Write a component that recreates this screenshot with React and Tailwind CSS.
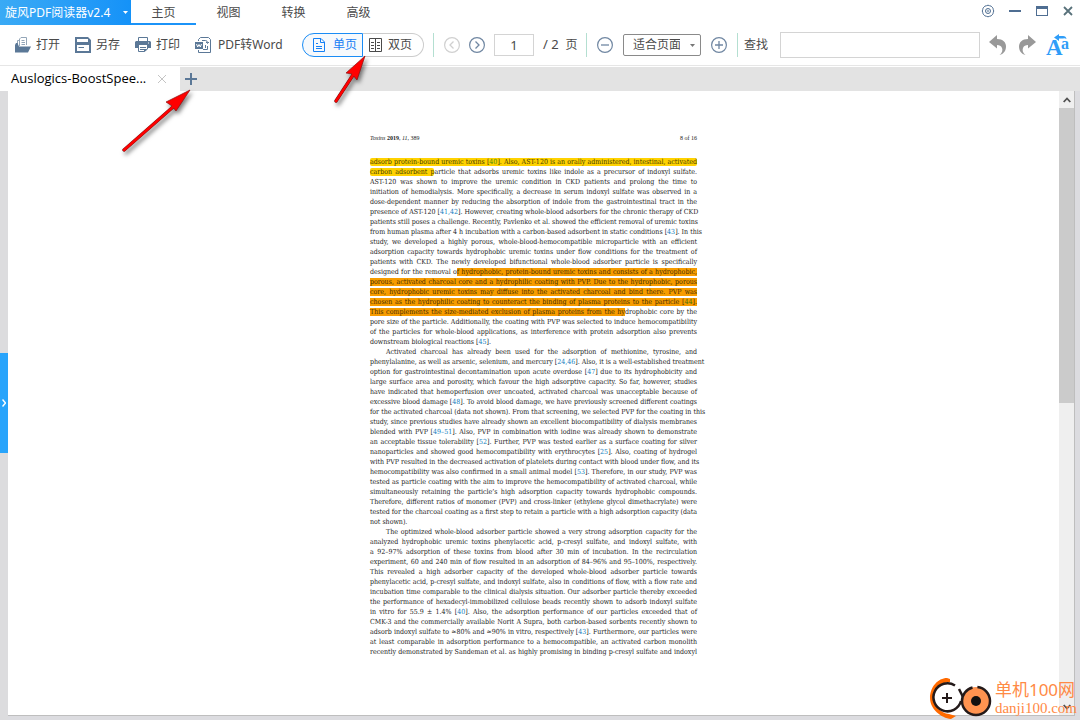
import React from "react";

const tabs = ["主页", "视图", "转换", "高级"];

/* Each paragraph is a list of typeset lines; highlighted runs are [tone, text] pairs. */
const paragraphs = [
  [
    [["yellow", "adsorb protein-bound uremic toxins [40]. Also, AST-120 is an orally administered, intestinal, activated"]],
    [["yellow", "carbon adsorbent p"], "article that adsorbs uremic toxins like indole as a precursor of indoxyl sulfate."],
    "AST-120 was shown to improve the uremic condition in CKD patients and prolong the time to",
    "initiation of hemodialysis. More specifically, a decrease in serum indoxyl sulfate was observed in a",
    "dose-dependent manner by reducing the absorption of indole from the gastrointestinal tract in the",
    "presence of AST-120 [41,42]. However, creating whole-blood adsorbers for the chronic therapy of CKD",
    "patients still poses a challenge. Recently, Pavlenko et al. showed the efficient removal of uremic toxins",
    "from human plasma after 4 h incubation with a carbon-based adsorbent in static conditions [43]. In this",
    "study, we developed a highly porous, whole-blood-hemocompatible microparticle with an efficient",
    "adsorption capacity towards hydrophobic uremic toxins under flow conditions for the treatment of",
    "patients with CKD. The newly developed bifunctional whole-blood adsorber particle is specifically",
    ["designed for the removal o", ["orange", "f hydrophobic, protein-bound uremic toxins and consists of a hydrophobic,"]],
    [["orange", "porous, activated charcoal core and a hydrophilic coating with PVP. Due to the hydrophobic, porous"]],
    [["orange", "core, hydrophobic uremic toxins may diffuse into the activated charcoal and bind there. PVP was"]],
    [["orange", "chosen as the hydrophilic coating to counteract the binding of plasma proteins to the particle [44]."]],
    [["orange", "This complements the size-mediated exclusion of plasma proteins from the hy"], "drophobic core by the"],
    "pore size of the particle. Additionally, the coating with PVP was selected to induce hemocompatibility",
    "of the particles for whole-blood applications, as interference with protein adsorption also prevents",
    "downstream biological reactions [45].",
  ],
  [
    "Activated charcoal has already been used for the adsorption of methionine, tyrosine, and",
    "phenylalanine, as well as arsenic, selenium, and mercury [24,46]. Also, it is a well-established treatment",
    "option for gastrointestinal decontamination upon acute overdose [47] due to its hydrophobicity and",
    "large surface area and porosity, which favour the high adsorptive capacity. So far, however, studies",
    "have indicated that hemoperfusion over uncoated, activated charcoal was unacceptable because of",
    "excessive blood damage [48]. To avoid blood damage, we have previously screened different coatings",
    "for the activated charcoal (data not shown). From that screening, we selected PVP for the coating in this",
    "study, since previous studies have already shown an excellent biocompatibility of dialysis membranes",
    "blended with PVP [49–51]. Also, PVP in combination with iodine was already shown to demonstrate",
    "an acceptable tissue tolerability [52]. Further, PVP was tested earlier as a surface coating for silver",
    "nanoparticles and showed good hemocompatibility with erythrocytes [25]. Also, coating of hydrogel",
    "with PVP resulted in the decreased activation of platelets during contact with blood under flow, and its",
    "hemocompatibility was also confirmed in a small animal model [53]. Therefore, in our study, PVP was",
    "tested as particle coating with the aim to improve the hemocompatibility of activated charcoal, while",
    "simultaneously retaining the particle’s high adsorption capacity towards hydrophobic compounds.",
    "Therefore, different ratios of monomer (PVP) and cross-linker (ethylene glycol dimethacrylate) were",
    "tested for the charcoal coating as a first step to retain a particle with a high adsorption capacity (data",
    "not shown).",
  ],
  [
    "The optimized whole-blood adsorber particle showed a very strong adsorption capacity for the",
    "analyzed hydrophobic uremic toxins phenylacetic acid, p-cresyl sulfate, and indoxyl sulfate, with",
    "a 92–97% adsorption of these toxins from blood after 30 min of incubation. In the recirculation",
    "experiment, 60 and 240 min of flow resulted in an adsorption of 84–96% and 95–100%, respectively.",
    "This revealed a high adsorber capacity of the developed whole-blood adsorber particle towards",
    "phenylacetic acid, p-cresyl sulfate, and indoxyl sulfate, also in conditions of flow, with a flow rate and",
    "incubation time comparable to the clinical dialysis situation. Our adsorber particle thereby exceeded",
    "the performance of hexadecyl-immobilized cellulose beads recently shown to adsorb indoxyl sulfate",
    "in vitro for 55.9 ± 1.4% [40]. Also, the adsorption performance of our particles exceeded that of",
    "CMK-3 and the commercially available Norit A Supra, both carbon-based sorbents recently shown to",
    "adsorb indoxyl sulfate to ≈80% and ≈90% in vitro, respectively [43]. Furthermore, our particles were",
    "at least comparable in adsorption performance to a hemocompatible, an activated carbon monolith",
    "recently demonstrated by Sandeman et al. as highly promising in binding p-cresyl sulfate and indoxyl",
  ],
];

function Cited({ text, linkClass }) {
  return text.split(/(\[[\d,–]+\])/).map((part, i) =>
    i % 2 ? (
      <React.Fragment key={i}>
        [<a href="#references" className={linkClass}>{part.slice(1, -1)}</a>]
      </React.Fragment>
    ) : (
      part
    )
  );
}

const tones = {
  yellow: ["rounded-xs bg-[#ffd200] text-[#453900]", "text-[#4a8a10]"],
  orange: ["bg-[#f79c00] text-[#452c00]", "text-[#4a7010]"],
};

function Line({ line, indent, last }) {
  const runs = Array.isArray(line) ? line : [line];
  return (
    <span className={`block whitespace-nowrap ${last ? "" : "[text-align-last:justify]"} ${indent ? "pl-4" : ""}`}>
      {runs.map((run, i) =>
        Array.isArray(run) ? (
          <mark key={i} className={tones[run[0]][0]}>
            <Cited text={run[1]} linkClass={tones[run[0]][1]} />
          </mark>
        ) : (
          <Cited key={i} text={run} linkClass="text-[#1580c0]" />
        )
      )}
    </span>
  );
}

function Icon({ className = "size-4", box = "0 0 16 16", children }) {
  return (
    <svg viewBox={box} className={`${className} shrink-0`} fill="none" stroke="currentColor" aria-hidden="true">
      {children}
    </svg>
  );
}

function Tool({ label, icon, className = "gap-[5px]" }) {
  return (
    <button type="button" className={`flex shrink-0 items-center whitespace-nowrap ${className}`}>
      {icon}
      <span>{label}</span>
    </button>
  );
}

const OpenIcon = () => (
  <Icon className="size-4 text-[#5b7897]">
    <path d="M2.500 10V3.500H4M4.500 9V2L6 .500H11.500V8" stroke="#94a6b8" />
    <path d="M6.500 3.500H9.500M6.500 5.500H10M6.500 7.500H10" stroke="#94a6b8" />
    <path d="M0 15.500V8L1 6H2.500L4 9.500H16L13 15.500Z" fill="currentColor" stroke="none" />
  </Icon>
);
const SaveIcon = () => (
  <Icon className="size-4 text-[#5b7897]">
    <path d="M0 0H13L16 3V16H0ZM2 2V5H13V2ZM2 8V14H14V8Z" fill="currentColor" fillRule="evenodd" stroke="none" />
    <path d="M3.500 10.500H9" />
  </Icon>
);
const PrintIcon = () => (
  <Icon className="size-4 text-[#5b7897]">
    <path d="M3.500 4V.5H12.500V4" />
    <path d="M1 4H15L16 5V11H13V8H3V11H0V5Z" fill="currentColor" stroke="none" />
    <path d="M13 6H14" stroke="#fff" />
    <path d="M3.500 8V14.500H9.500L12.500 12V8M5 10.500H11M5 12.500H9" />
    <path d="M9 15V12H12.500Z" fill="currentColor" stroke="none" />
  </Icon>
);
const WordIcon = () => (
  <Icon className="size-4 text-[#5b7897]">
    <path d="M3.500 4V2.500L5.500.5H13.500L15.500 2.500V15.500H3.500V13" />
    <path d="M0 5H8V12H0Z" fill="currentColor" stroke="none" />
    <path d="M1.500 7L2.700 10L4 7.500L5.300 10L6.500 7" stroke="#fff" />
    <path d="M7 3.500H10.500Q12.500 3.500 12.500 6M11 5L12.500 6.500L14 5M12.500 9V12.500H8M10.500 8V11" />
  </Icon>
);
const SingleIcon = () => (
  <Icon className="h-3.5 w-3" box="0 0 12 14">
    <path d="M.5.5H8L11.500 4V13.500H.5ZM7.500.5V4.500H11.500M3 5.500H5M3 8.500H9M3 10.500H9" />
  </Icon>
);
const DoubleIcon = () => (
  <Icon className="h-3.5 w-[13px]" box="0 0 13 14">
    <path d="M.5.5H12.500V13.500H.5ZM6.500.5V13.500M2 4.500H5M2 7.500H5M2 10.500H5M8 4.500H11M8 7.500H11M8 10.500H11" />
  </Icon>
);

function CircleButton({ label, path, className = "text-[#7087a2]" }) {
  return (
    <button type="button" aria-label={label} className={`shrink-0 ${className}`}>
      <Icon className="size-4">
        <circle cx="8" cy="8" r="7.400" strokeWidth="1.200" />
        <path d={path} strokeWidth="1.300" />
      </Icon>
    </button>
  );
}

const Divider = ({ className }) => <span className={`h-6 w-px shrink-0 bg-[#b4dfd1] ${className}`} />;

function TitleBar() {
  return (
    <header className="flex h-[25px] shrink-0 items-stretch">
      <button type="button" className="flex w-[131px] items-center justify-between bg-linear-to-r from-[#3aaaf5] to-[#1492f8] pr-[3px] pl-[5px] text-white">
        <span>旋风PDF阅读器v2.4</span>
        <Icon className="h-[3px] w-[5px]" box="0 0 5 3">
          <path d="M0 0H5L2.500 3Z" fill="currentColor" stroke="none" />
        </Icon>
      </button>
      <nav className="flex flex-1">
        {tabs.map((t, i) => (
          <button key={t} type="button" className={`w-[65px] border-b-2 pt-[2px] ${i === 0 ? "border-[#1b93f8]" : "border-transparent"}`}>
            {t}
          </button>
        ))}
      </nav>
      <div className="flex items-center gap-[15px] pr-[7px] pb-[3px] text-[#4f6e92]">
        <button type="button" aria-label="设置">
          <Icon className="size-3 overflow-visible" box="0 0 12 12">
            <path d="M4.500.7Q6-.3 7.500.7Q9.500.8 10 2.200Q11.500 3 11.300 4.700Q12.200 6 11.300 7.300Q11.500 9 10 9.800Q9.500 11.200 7.500 11.300Q6 12.300 4.500 11.300Q2.500 11.200 2 9.800Q.5 9 .7 7.300Q-.2 6 .7 4.700Q.5 3 2 2.200Q2.500.8 4.500.7Z" />
            <circle cx="6" cy="6" r="2.500" />
            <circle cx="6" cy="6" r=".8" strokeWidth=".6" />
          </Icon>
        </button>
        <button type="button" aria-label="最小化">
          <Icon className="size-3" box="0 0 12 12"><path d="M0 6H12" strokeWidth="2" /></Icon>
        </button>
        <button type="button" aria-label="最大化">
          <Icon className="size-3" box="0 0 12 12">
            <path d="M0 1H12V11H0ZM1 4V10H11V4Z" fill="currentColor" fillRule="evenodd" stroke="none" />
          </Icon>
        </button>
        <button type="button" aria-label="关闭">
          <Icon className="size-[10px]" box="0 0 10 10"><path d="M1 1L9 9M9 1L1 9" strokeWidth="1.800" stroke="#58717a" /></Icon>
        </button>
      </div>
    </header>
  );
}

function Toolbar() {
  return (
    <div className="flex h-[41px] shrink-0 items-center border-b border-[#e6e6e6] pr-[11px] pl-[15px]">
      <div className="flex shrink-0 gap-[15px]">
        <Tool label="打开" icon={<OpenIcon />} />
        <Tool label="另存" icon={<SaveIcon />} />
        <Tool label="打印" icon={<PrintIcon />} />
        <Tool label="PDF转Word" icon={<WordIcon />} className="w-[90px] gap-[7px]" />
      </div>
      <div className="ml-[17px] flex h-6 w-[122px] shrink-0">
        <Tool label="单页" icon={<SingleIcon />} className="w-[61px] gap-2 rounded-l-full border border-[#1a8cf5] bg-[#f6f9fc] pl-[10px] text-[#1580f5]" />
        <Tool label="双页" icon={<DoubleIcon />} className="flex-1 gap-[6px] rounded-r-full border border-l-0 border-[#cccccc] pl-[6px]" />
      </div>
      <Divider className="mr-[10px] ml-[9px]" />
      <div className="flex shrink-0 items-center gap-[9px]">
        <CircleButton label="上一页" path="M9.500 4.500L6 8L9.500 11.500" className="text-[#d0d0d0]" />
        <CircleButton label="下一页" path="M6.500 4.500L10 8L6.500 11.500" />
        <input aria-label="页码" defaultValue="1" className="h-[22px] w-10 border border-[#d4d4d4] text-center text-[13px] outline-none" />
        <span className="w-[35px] whitespace-pre text-[13px]">/ 2  <span className="text-xs">页</span></span>
      </div>
      <Divider className="mr-[10px] ml-[8px]" />
      <div className="flex shrink-0 items-center gap-[10px]">
        <CircleButton label="缩小" path="M4 8H12" />
        <span className="grid items-center">
          <select aria-label="缩放" className="col-start-1 row-start-1 h-[22px] w-[78px] appearance-none rounded-xs border border-[#8a8a8a] bg-white pr-5 pl-[9px] outline-none">
            <option>适合页面</option>
          </select>
          <Icon className="pointer-events-none col-start-1 row-start-1 mr-[6px] h-[3px] w-[5px] justify-self-end text-[#777]" box="0 0 5 3">
            <path d="M0 0H5L2.500 3Z" fill="currentColor" stroke="none" />
          </Icon>
        </span>
        <CircleButton label="放大" path="M4 8H12M8 4V12" />
      </div>
      <Divider className="mr-[6px] ml-[10px]" />
      <label htmlFor="find" className="shrink-0">查找</label>
      <input id="find" className="mr-[9px] ml-3 h-[26px] min-w-0 flex-1 border border-[#d4d4d4] px-2 outline-none" />
      <div className="flex shrink-0 items-center gap-[11px] text-[#999999]">
        <button type="button" aria-label="撤销">
          <Icon className="h-5 w-[18px]" box="0 0 18 20">
            <path d="M0 7L8 0V4C14 4 17 7.500 17 11.500C17 16 14.500 19 10.500 20C13 18 14 15.500 13 13C12 10.800 10.500 10 8 10V13.500Z" fill="currentColor" stroke="none" />
          </Icon>
        </button>
        <button type="button" aria-label="重做">
          <Icon className="h-5 w-[18px]" box="0 0 18 20">
            <path d="M18 7L10 0V4C4 4 1 7.500 1 11.500C1 16 3.500 19 7.500 20C5 18 4 15.500 5 13C6 10.800 7.500 10 10 10V13.500Z" fill="currentColor" stroke="none" />
          </Icon>
        </button>
        <button type="button" aria-label="翻译">
          <Icon className="h-[22px] w-[22px] overflow-visible text-[#2f9df8]" box="0 0 22 22">
            <text x="-1" y="21" fontFamily="Liberation Serif, serif" fontWeight="700" fontSize="23" fill="currentColor" stroke="none">A</text>
            <text x="14" y="15" fontFamily="Liberation Serif, serif" fontWeight="700" fontSize="16" fill="currentColor" stroke="none">a</text>
            <path d="M7 3.500L12 0V2H16Q19 2 19.500 5Q18 4 16 4.500H12V7Z" fill="currentColor" stroke="none" />
          </Icon>
        </button>
      </div>
    </div>
  );
}

function FileTabs() {
  return (
    <div className="flex h-[25px] shrink-0 items-stretch border-t border-white bg-[#e3e3e3]">
      <div className="flex w-[180px] items-center justify-between bg-white pr-[13px] pl-[11px] text-black">
        <span className="font-['Open_Sans',sans-serif] text-[13px]">Auslogics-BoostSpee...</span>
        <button type="button" aria-label="关闭标签">
          <Icon className="size-[10px] text-[#c4c4c4]" box="0 0 10 10"><path d="M1 1L9 9M9 1L1 9" /></Icon>
        </button>
      </div>
      <button type="button" aria-label="新建标签" className="pl-[5px] text-[#5b7897]">
        <Icon className="size-3" box="0 0 12 12"><path d="M0 6H12M6 0V12" strokeWidth="2" /></Icon>
      </button>
    </div>
  );
}

function Page() {
  return (
    <article className="mx-auto w-[327px] pt-[42px] font-['DejaVu_Serif_Condensed','Liberation_Serif',serif] text-[7px] leading-[10px] text-[#222]">
      <div className="mb-[14px] flex justify-between font-['Liberation_Serif',serif] text-[6px]">
        <span><i>Toxins</i> <b>2019</b>, <i>11</i>, 389</span>
        <span>8 of 16</span>
      </div>
      {paragraphs.map((lines, p) => (
        <p key={p}>
          {lines.map((line, i) => (
            <Line key={i} line={line} indent={p > 0 && i === 0} last={i === lines.length - 1 && p < 2} />
          ))}
        </p>
      ))}
    </article>
  );
}

function Watermark() {
  return (
    <div className="absolute right-[3px] bottom-0 flex items-center gap-[2px] text-[#ff8a45]">
      <svg viewBox="0 0 64 44" className="h-11 w-16" fill="none" aria-hidden="true">
        <path d="M21 3L18 2C9 2 1 11 1 22C1 33 12 42 22 43L27 40L20 38C12 37 5 31 5 21C5 12 11 7 21 6Z" fill="#ff6a00" />
        <path d="M26 9.500A14 14 0 1 0 32 25" fill="#fff" stroke="#241a1a" strokeWidth="2.500" />
        <path d="M13 22H23M18 17V27" stroke="#241a1a" strokeWidth="2" />
        <circle cx="47" cy="25" r="14" fill="#ff9350" stroke="#241a1a" strokeWidth="2.500" strokeDasharray="62 5 21 0" />
        <circle cx="47" cy="25" r="5" fill="#111" />
        <path d="M30 13L34 21" stroke="#241a1a" strokeWidth="2.500" />
      </svg>
      <div className="leading-none">
        <div className="text-[17px] leading-5">单机100网</div>
        <div className="font-['Liberation_Serif',serif] text-[15px] leading-4">danji100.com</div>
      </div>
    </div>
  );
}

function Pointer({ className, box, line, head }) {
  return (
    <svg viewBox={box} className={`pointer-events-none absolute overflow-visible drop-shadow-[2px_3px_2px_rgba(0,0,0,0.5)] ${className}`} aria-hidden="true">
      <path d={line} stroke="#7a1010" strokeWidth="3.400" strokeLinecap="round" />
      <path d={head} fill="#ff0000" stroke="#8a1010" strokeWidth=".7" />
      <path d={line} stroke="#ff0000" strokeWidth="2.400" strokeLinecap="round" />
    </svg>
  );
}

export default function App() {
  return (
    <div className="relative flex h-screen flex-col overflow-hidden bg-white font-['Noto_Sans','Noto_Sans_CJK_SC',sans-serif] text-xs text-[#4a4a4a]">
      <TitleBar />
      <Toolbar />
      <FileTabs />
      <div className="flex min-h-0 flex-1">
        <aside className="flex w-2 shrink-0 flex-col justify-center bg-[#dcdcde] pb-[5px]">
          <button type="button" aria-label="展开侧栏" className="flex h-[100px] items-center justify-center bg-[#28a4fb] text-white">
            <Icon className="h-2 w-1" box="0 0 4 8"><path d="M.5.5L3.500 4L.5 7.500" strokeWidth="1.500" /></Icon>
          </button>
        </aside>
        <div className="flex min-w-0 flex-1 flex-col border-r-[5px] border-b-[4px] border-[#dcdce0]">
          <div className="flex min-h-0 flex-1 border-r border-b border-[#bebebe]">
            <main className="min-w-0 flex-1 overflow-hidden">
              <Page />
            </main>
            <div className="flex w-[15px] shrink-0 flex-col items-center bg-[#efefef] text-[#505050]">
              <span className="flex h-[17px] items-center">
                <Icon className="h-[6px] w-2" box="0 0 8 6"><path d="M.7 5L4 1.500L7.300 5" strokeWidth="1.800" /></Icon>
              </span>
              <span className="h-[295px] w-full bg-[#cbcbcb]" />
              <span className="mt-auto flex h-[17px] items-center">
                <Icon className="h-[6px] w-2" box="0 0 8 6"><path d="M.7 1L4 4.500L7.300 1" strokeWidth="1.800" /></Icon>
              </span>
            </div>
          </div>
        </div>
      </div>
      <Pointer className="top-[90px] left-[123px] h-[61px] w-[67px]" box="0 0 67 61" line="M1 60L50 17" head="M67 0L43 12L49 16L53 21Z" />
      <Pointer className="top-[56px] left-[335px] h-[46px] w-[31px]" box="0 0 31 46" line="M1 45L18 19" head="M30 0L11 17L17 18L22 24Z" />
      <Watermark />
    </div>
  );
}
